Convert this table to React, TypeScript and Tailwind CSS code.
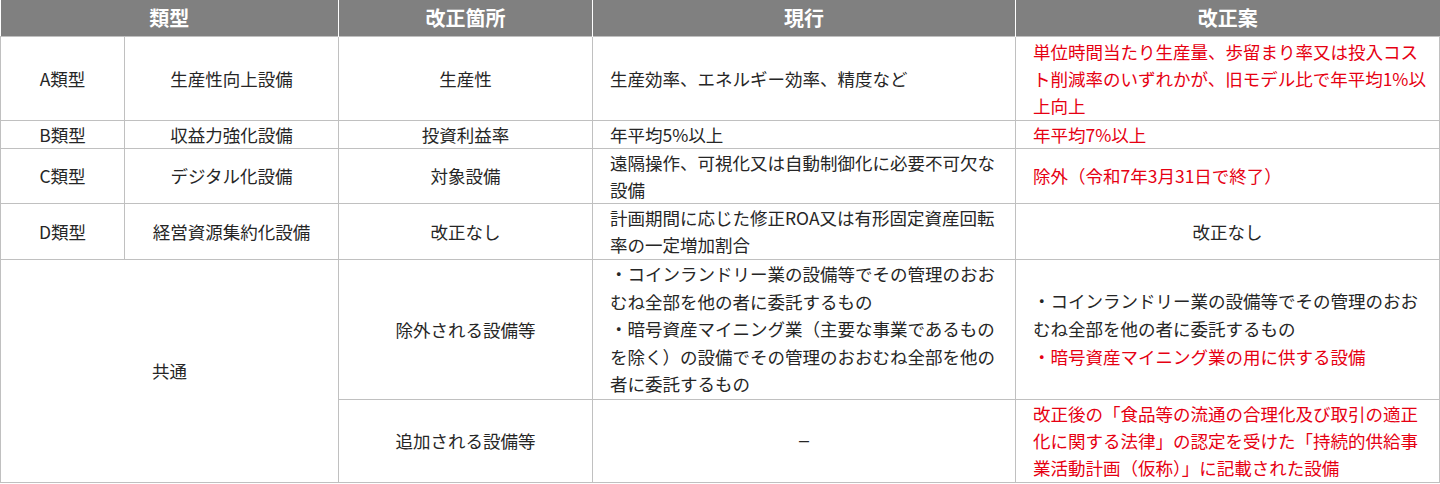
import React from "react";

const td = "border border-[#c0c0c0] align-middle p-0";
const center = `${td} text-center`;
const left = `${td} pl-[17px] pr-1 text-left whitespace-nowrap`;
const red = "text-[#e60012]";

export default function App() {
  return (
    <div className="w-[1440px] bg-white font-['Noto_Sans_CJK_JP',sans-serif] text-[17.5px] leading-[27px] text-[#262626]">
      <table className="w-[1439px] table-fixed border-collapse">
        <colgroup>
          <col className="w-[124px]" />
          <col className="w-[214px]" />
          <col className="w-[254px]" />
          <col className="w-[423px]" />
          <col className="w-[424px]" />
        </colgroup>
        <thead>
          <tr className="h-[36px] bg-[#808080] text-[20px] font-bold text-white">
            <th colSpan={2} className="border-r border-white p-0">
              類型
            </th>
            <th className="border-r border-white p-0">改正箇所</th>
            <th className="border-r border-white p-0">現行</th>
            <th className="p-0">改正案</th>
          </tr>
        </thead>
        <tbody>
          <tr className="h-[84px]">
            <td className={center}>A類型</td>
            <td className={center}>生産性向上設備</td>
            <td className={center}>生産性</td>
            <td className={left}>生産効率、エネルギー効率、精度など</td>
            <td className={`${left} ${red}`}>
              単位時間当たり生産量、歩留まり率又は投入コス
              <br />
              ト削減率のいずれかが、旧モデル比で年平均1%以
              <br />
              上向上
            </td>
          </tr>
          <tr className="h-[28px]">
            <td className={center}>B類型</td>
            <td className={center}>収益力強化設備</td>
            <td className={center}>投資利益率</td>
            <td className={left}>年平均5%以上</td>
            <td className={`${left} ${red}`}>年平均7%以上</td>
          </tr>
          <tr className="h-[55px]">
            <td className={center}>C類型</td>
            <td className={center}>デジタル化設備</td>
            <td className={center}>対象設備</td>
            <td className={left}>
              遠隔操作、可視化又は自動制御化に必要不可欠な
              <br />
              設備
            </td>
            <td className={`${left} ${red}`}>除外（令和7年3月31日で終了）</td>
          </tr>
          <tr className="h-[56px]">
            <td className={center}>D類型</td>
            <td className={center}>経営資源集約化設備</td>
            <td className={center}>改正なし</td>
            <td className={left}>
              計画期間に応じた修正ROA又は有形固定資産回転
              <br />
              率の一定増加割合
            </td>
            <td className={center}>改正なし</td>
          </tr>
          <tr className="h-[140px]">
            <td colSpan={2} rowSpan={2} className={center}>
              共通
            </td>
            <td className={center}>除外される設備等</td>
            <td className={`${left} leading-[27.6px]`}>
              ・コインランドリー業の設備等でその管理のおお
              <br />
              むね全部を他の者に委託するもの
              <br />
              ・暗号資産マイニング業（主要な事業であるもの
              <br />
              を除く）の設備でその管理のおおむね全部を他の
              <br />
              者に委託するもの
            </td>
            <td className={`${left} leading-[28px]`}>
              ・コインランドリー業の設備等でその管理のおお
              <br />
              むね全部を他の者に委託するもの
              <br />
              <span className={red}>・暗号資産マイニング業の用に供する設備</span>
            </td>
          </tr>
          <tr className="h-[83px]">
            <td className={center}>追加される設備等</td>
            <td className={`${center} font-['Liberation_Sans',sans-serif] text-[18px]`}>–</td>
            <td className={`${left} ${red}`}>
              改正後の「食品等の流通の合理化及び取引の適正
              <br />
              化に関する法律」の認定を受けた「持続的供給事
              <br />
              業活動計画（仮称）」に記載された設備
            </td>
          </tr>
        </tbody>
      </table>
    </div>
  );
}
